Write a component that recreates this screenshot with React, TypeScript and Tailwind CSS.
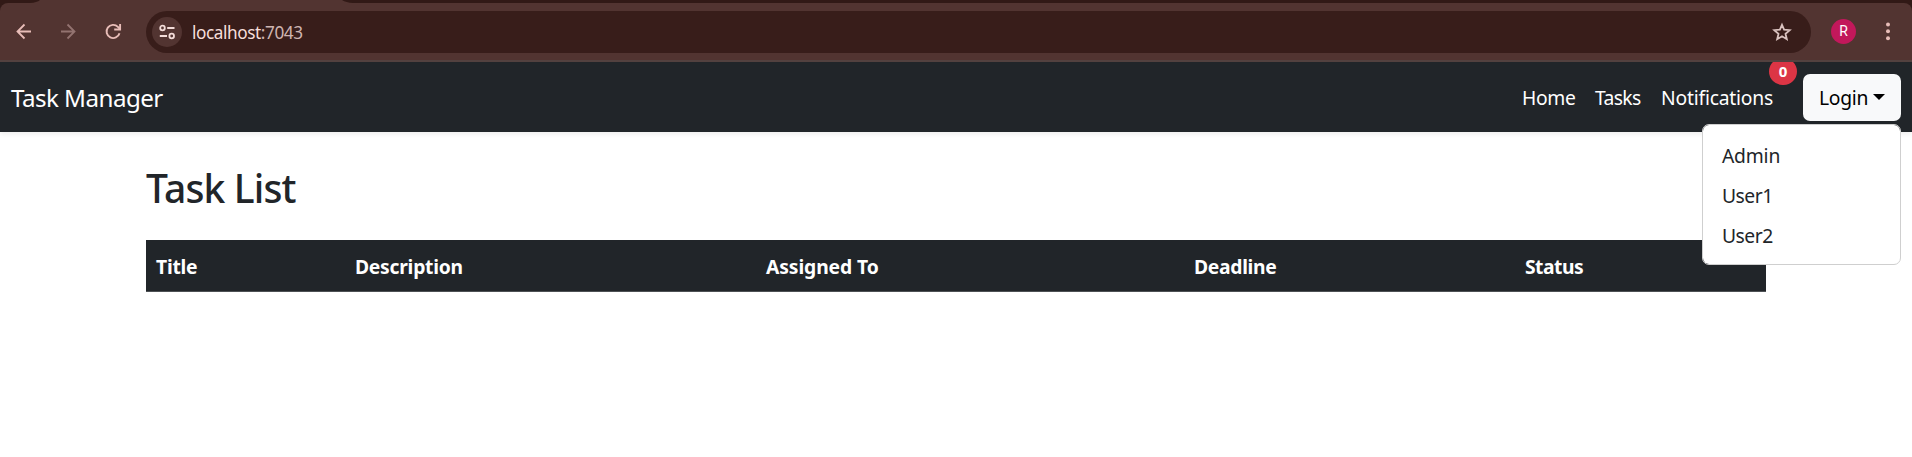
const headers = [
  { label: 'Title', cls: 'w-[199px] tracking-[-0.25px]' },
  { label: 'Description', cls: 'w-[411px] tracking-[-0.25px]' },
  { label: 'Assigned To', cls: 'w-[428px] tracking-[-0.1px]' },
  { label: 'Deadline', cls: 'w-[331px] tracking-[-0.3px]' },
  { label: 'Status', cls: 'w-[251px] tracking-[-0.5px]' },
];

const accounts = [
  { name: 'Admin', cls: 'tracking-[-0.2px]' },
  { name: 'User1', cls: 'tracking-[-0.5px]' },
  { name: 'User2', cls: 'tracking-[-0.5px]' },
];

function BrowserBar() {
  return (
    <div className="flex h-[62px] flex-col bg-[#311916]">
      <svg className="block h-[3px] w-full shrink-0" viewBox="0 0 1912 3" preserveAspectRatio="none">
        <path d="M30 3 Q37 2.5 40 0 H342 Q346 2.5 353 3 Z" fill="#523431" />
      </svg>
      <div className="flex h-[57px] items-center rounded-t-[8px] bg-[#523431]">
        <svg className="ml-[14px] mt-[-1px] size-5" viewBox="0 0 20 20" fill="none" stroke="#e8bdb8" strokeWidth="1.8">
          <path d="M17 10.500H3.500M10.500 3.500L3.500 10.500L10.500 17.500" />
        </svg>
        <svg className="ml-[24px] mt-[-1px] size-5" viewBox="0 0 20 20" fill="none" stroke="#937370" strokeWidth="1.8">
          <path d="M3 10.500H16.500M9.500 3.500L16.500 10.500L9.500 17.500" />
        </svg>
        <svg className="ml-[25px] mt-[-1px] size-5" viewBox="0 0 20 20" fill="none" stroke="#e8bdb8" strokeWidth="1.9">
          <path d="M16.500 12.200A6.600 6.600 0 1 1 14.900 5.900L16.800 7.800" />
          <path d="M17.100 3V8.500H11.200" />
        </svg>
        <div className="ml-[23px] mt-px flex h-[42px] w-[1665px] items-center rounded-full bg-[#381d1a] pl-[6px] pr-[19.500px]">
          <div className="flex size-[30px] items-center justify-center rounded-full bg-[#523431]">
            <svg className="size-4" viewBox="0 0 16 16" fill="none" stroke="#f3dcd9" strokeWidth="1.8">
              <circle cx="3.500" cy="4" r="2.300" />
              <path d="M8.200 4H15.500M.8 12H8" />
              <circle cx="12.700" cy="12" r="2.300" />
            </svg>
          </div>
          <div className="ml-[10px] mt-px flex-1 text-[17.2px] leading-none tracking-[-0.42px] text-[#f6dfdc]">
            localhost<span className="text-[#cfb5b1]">:7043</span>
          </div>
          <svg className="size-5" viewBox="0 0 20 20" fill="none" stroke="#d9c2bf" strokeWidth="1.8">
            <path d="M10 2.800L12.100 7.700L17.700 8.200L13.500 11.800L14.800 17.200L10 14.300L5.200 17.200L6.500 11.800L2.300 8.200L7.900 7.700Z" />
          </svg>
        </div>
        <div className="ml-[20px] mt-[-1px] flex size-[25px] items-center justify-center rounded-full bg-[#c2185b] font-[Roboto,sans-serif] text-[14px] leading-none text-white">
          R
        </div>
        <svg className="ml-[22px] mt-[-1px] size-5" viewBox="0 0 20 20" fill="#e8bdb8">
          <circle cx="10" cy="3.500" r="2" />
          <circle cx="10" cy="10.300" r="2" />
          <circle cx="10" cy="17.200" r="2" />
        </svg>
      </div>
      <div className="h-[2px] bg-[#53413f]" />
    </div>
  );
}

function Navbar() {
  return (
    <nav className="flex h-[70px] items-center bg-[#212529] pl-[11px] pr-[11px] text-[19.300px] text-white shadow-[0_2px_5px_rgba(0,0,0,0.075)]">
      <a className="pt-[2px] text-[24.200px] leading-[38px] tracking-[-0.55px]">Task Manager</a>
      <div className="ml-auto flex items-center">
        <a className="w-[73px] pt-[2px] tracking-[-0.35px]">Home</a>
        <a className="w-[66px] pt-[2px] tracking-[-0.65px]">Tasks</a>
        <div className="relative w-[142px] pt-[2px]">
          <a className="tracking-[-0.2px]">Notifications</a>
          <div className="absolute left-[108px] top-[-20px] h-[23px] w-[28px] overflow-hidden">
            <span className="absolute bottom-0 left-0 flex h-[27px] w-[28px] items-center justify-center rounded-full bg-[#dc3545] pt-px text-[15px] font-bold leading-none">
              0
            </span>
          </div>
        </div>
        <div className="relative">
          <button className="flex h-[47px] w-[98px] items-center rounded-[7px] bg-[#f8f9fa] pl-[16px] pt-[2px] tracking-[-0.3px] text-black">
            Login
            <svg className="ml-[5px] mt-[-2px] h-[6px] w-[12px]" viewBox="0 0 12 6">
              <path d="M0 0H12L6 6Z" fill="#000" />
            </svg>
          </button>
          <ul className="absolute right-0 top-[50px] z-10 h-[141px] w-[199px] rounded-[7px] border border-[#cfcfcf] bg-white bg-clip-padding pt-[10px] text-[#212529]">
            {accounts.map((a) => (
              <li key={a.name} className={`h-[40px] pl-[19px] leading-[41px] ${a.cls}`}>
                {a.name}
              </li>
            ))}
          </ul>
        </div>
      </div>
    </nav>
  );
}

export default function App() {
  return (
    <div className="h-[457px] w-full overflow-hidden bg-white font-['Noto_Sans',sans-serif] text-[#212529]">
      <BrowserBar />
      <Navbar />
      <main className="ml-[146px] w-[1620px] pt-[32px]">
        <h2 className="h-[76px] text-[39px] font-medium leading-[48px] tracking-[-0.85px]">Task List</h2>
        <table className="w-full table-fixed border-collapse bg-[#212529] text-[19.300px] text-white">
          <thead>
            <tr className="h-[51px] border-b border-[#4d5154]">
              {headers.map((h) => (
                <th key={h.label} className={`${h.cls} pl-[10px] pt-[3px] text-left font-bold leading-[30px]`}>
                  {h.label}
                </th>
              ))}
            </tr>
          </thead>
        </table>
      </main>
    </div>
  );
}
